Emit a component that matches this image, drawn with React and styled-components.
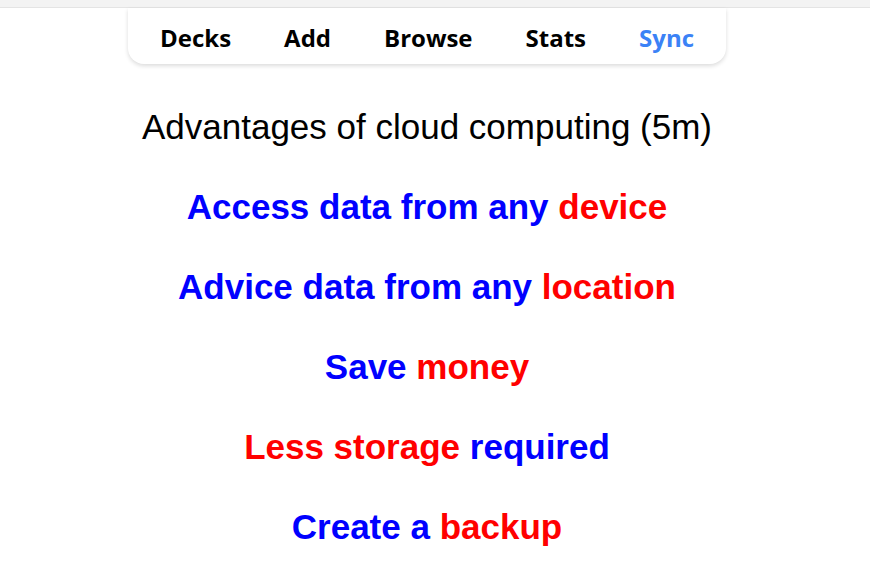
import React from 'react'
import styled, { createGlobalStyle } from 'styled-components'

const GlobalStyle = createGlobalStyle`
    html, body {
        margin: 0;
        padding: 0;
        background: #fff;
    }
`

const Page = styled.div`
    min-height: 578px;
    display: flex;
    flex-direction: column;
`
const TopStrip = styled.div`
    height: 7px;
    background-color: #f3f3f3;
    border-bottom: 1px solid #e4e4e4;
`
const Column = styled.div`
    width: 598px;
    margin-left: 128px;
    display: flex;
    flex-direction: column;
    align-items: center;
`
const Nav = styled.nav`
    align-self: stretch;
    height: 56px;
    padding-top: 2px;
    box-sizing: border-box;
    display: flex;
    align-items: center;
    justify-content: center;
    gap: 53px;
    background: #fff;
    border-radius: 0 0 16px 16px;
    box-shadow: 0 2px 4px rgba(0, 0, 0, 0.14);
`
const NavItem = styled.div`
    font-family: 'Open Sans', 'Noto Sans', sans-serif;
    font-weight: 700;
    font-size: 24px;
    color: ${props => (props.active ? '#3b82f6' : '#000')};
    cursor: pointer;
`
const Card = styled.div`
    font-family: 'Liberation Sans', Arial, sans-serif;
    text-align: center;
    padding-top: 43px;
`
const Question = styled.div`
    font-size: 35px;
    color: #000;
    line-height: 40px;
    margin-bottom: 40px;
`
const Answer = styled.div`
    font-size: 35px;
    font-weight: 700;
    line-height: 40px;
    margin-bottom: 40px;
`
const Word = styled.span`
    color: ${props => (props.hot ? '#ff0000' : '#0000ff')};
`

const answers = [
    [['Access data from any', false], ['device', true]],
    [['Advice data from any', false], ['location', true]],
    [['Save', false], ['money', true]],
    [['Less storage', true], ['required', false]],
    [['Create a', false], ['backup', true]],
]

export default function App() {
    return (
        <>
            <GlobalStyle />
            <Page>
                <TopStrip />
                <Column>
                    <Nav>
                        {['Decks', 'Add', 'Browse', 'Stats', 'Sync'].map(v => (
                            <NavItem key={v} active={v === 'Sync'}>
                                {v}
                            </NavItem>
                        ))}
                    </Nav>
                    <Card>
                        <Question>Advantages of cloud computing (5m)</Question>
                        {answers.map((parts, i) => (
                            <Answer key={i}>
                                {parts.map(([text, hot], j) => (
                                    <React.Fragment key={j}>
                                        {j > 0 && ' '}
                                        <Word hot={hot}>{text}</Word>
                                    </React.Fragment>
                                ))}
                            </Answer>
                        ))}
                    </Card>
                </Column>
            </Page>
        </>
    )
}
